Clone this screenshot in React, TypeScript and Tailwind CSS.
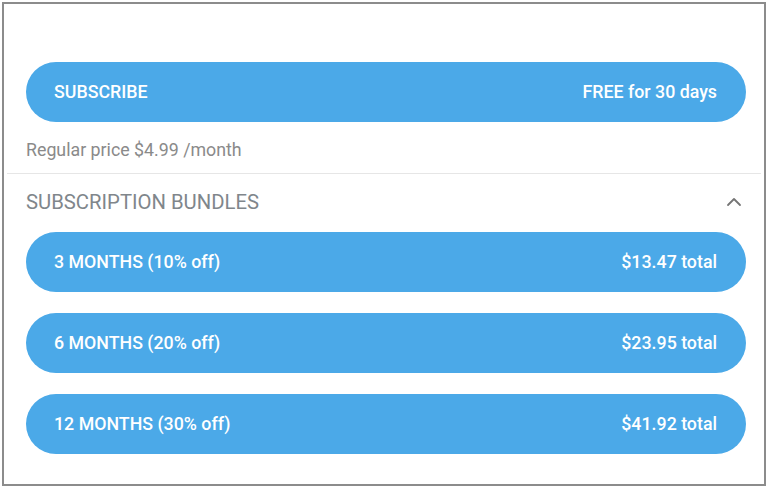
import { ChevronUp } from 'lucide-react'

const bundles = [
  { label: '3 MONTHS (10% off)', price: '$13.47 total' },
  { label: '6 MONTHS (20% off)', price: '$23.95 total' },
  { label: '12 MONTHS (30% off)', price: '$41.92 total' },
]

function PillButton({ left, right }: { left: string; right: string }) {
  return (
    <button className="flex h-[60px] w-full items-center justify-between rounded-full bg-[#4ba9e8] pl-[28px] pr-[29px] text-[17.8px] font-medium text-white">
      <span>{left}</span>
      <span>{right}</span>
    </button>
  )
}

export default function App() {
  return (
    <div className="h-[488px] w-[768px] bg-white p-[2px] font-['Roboto',sans-serif]">
      <div className="h-[484px] border-2 border-[#8c8c8c]">
        <div className="px-[22px] pr-[18px] pt-[58px]">
          <PillButton left="SUBSCRIBE" right="FREE for 30 days" />
          <p className="mt-[15px] text-[17.8px] text-[#8a8a8a]">Regular price $4.99 /month</p>
        </div>
        <div className="mx-[3px] mt-[9px] border-t border-[#e6e6e6]" />
        <div className="flex items-center justify-between pl-[22px] pr-[18px] pt-[13px]">
          <h2 className="text-[20.3px] text-[#80868b]">SUBSCRIPTION BUNDLES</h2>
          <ChevronUp className="h-[24px] w-[24px] text-[#757575]" strokeWidth={1.8} />
        </div>
        <div className="mt-[15px] flex flex-col gap-[21px] pl-[22px] pr-[18px]">
          {bundles.map((b) => (
            <PillButton key={b.label} left={b.label} right={b.price} />
          ))}
        </div>
      </div>
    </div>
  )
}
